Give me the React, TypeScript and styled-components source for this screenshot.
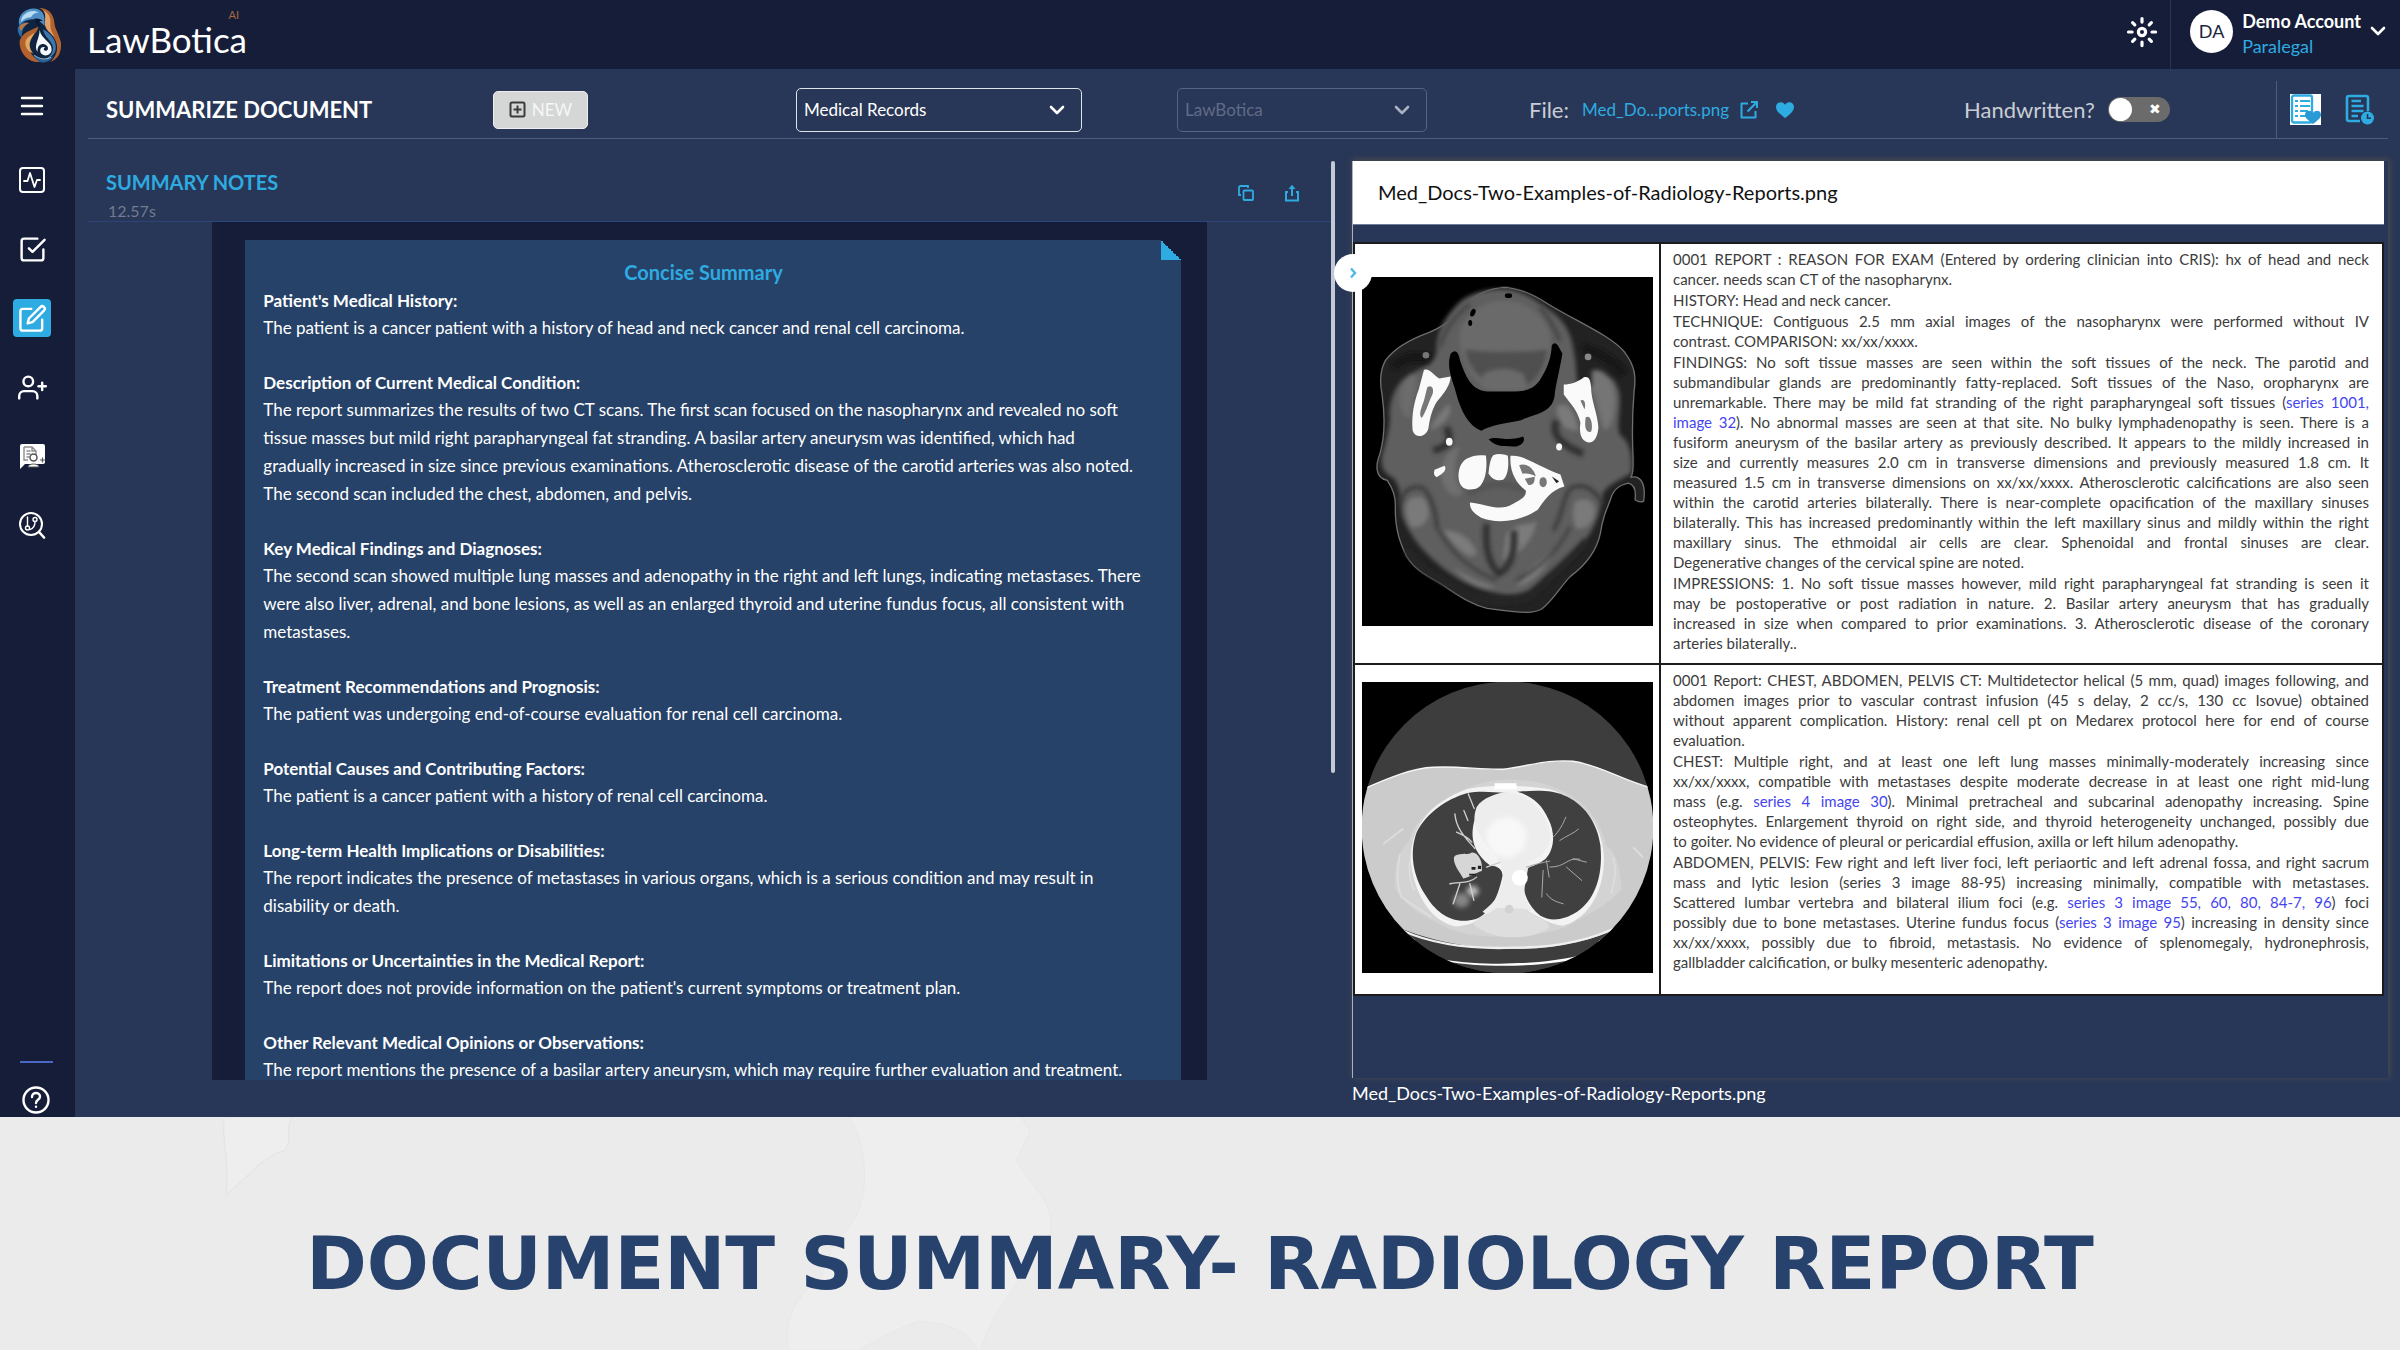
import React from "react";
import styled, { createGlobalStyle } from "styled-components";
import { FiCheckSquare, FiEdit, FiUserPlus } from "react-icons/fi";

const c = {
  navy: "#161d39",
  main: "#283757",
  card: "#264268",
  accent: "#2eabe1",
  line: "#4d5b7c",
  soft: "#c9cdd6",
};

const GlobalStyle = createGlobalStyle`
  *, *::before, *::after { box-sizing: border-box; }
  body { margin: 0; background: #ebebeb; }
  button, select, input { font: inherit; }
  h1, h2, h3, p { margin: 0; }
`;

const Page = styled.div`
  display: flex;
  flex-direction: column;
  height: 100vh;
  font-family: Lato, "Open Sans", sans-serif;
  color: #fff;
`;

const AppWindow = styled.div`
  flex: 1;
  min-height: 0;
  display: flex;
  flex-direction: column;
  background: ${c.navy};
`;

/* ---------- header ---------- */
const Header = styled.header`
  flex: none;
  height: 69px;
  display: flex;
  align-items: stretch;
  padding: 0 14px 0 15px;
`;

const Brand = styled.a`
  display: flex;
  align-items: center;
  gap: 24px;
  color: #fff;
  text-decoration: none;
`;

const BrandText = styled.span`
  display: flex;
  flex-direction: column;
  padding-bottom: 3px;
`;

const BrandMark = styled.small`
  align-self: flex-end;
  margin-right: 8px;
  font-size: 11px;
  line-height: 12px;
  color: #a9683f;
`;

const BrandName = styled.span`
  font-size: 35px;
  line-height: 36px;
`;

const HeaderRight = styled.div`
  display: flex;
  align-items: stretch;
  margin-left: auto;
`;

const ThemeButton = styled.button`
  width: 57px;
  padding: 0 0 5px;
  border: 0;
  background: none;
  display: flex;
  align-items: center;
  justify-content: center;
`;

const Account = styled.button`
  display: flex;
  align-items: center;
  gap: 9px;
  padding: 0 0 7px 19px;
  border: 0;
  border-left: 1px solid #283556;
  background: none;
  color: #fff;
  text-align: left;
`;

const Avatar = styled.span`
  display: flex;
  align-items: center;
  justify-content: center;
  width: 43px;
  height: 43px;
  border-radius: 50%;
  background: #fff;
  color: #1d2540;
  font-size: 18px;
`;

const AccountText = styled.span`
  display: flex;
  flex-direction: column;
  padding-top: 5px;
  font-size: 18px;
  line-height: 25px;
`;

const Role = styled.span`
  color: ${c.accent};
`;

/* ---------- body shell ---------- */
const Shell = styled.div`
  flex: 1;
  min-height: 0;
  display: flex;
`;

const Sidebar = styled.nav`
  flex: none;
  width: 75px;
  display: flex;
  flex-direction: column;
  padding: 18px 0 2px 13px;
`;

const SideButton = styled.button<{ $active?: boolean }>`
  display: flex;
  align-items: center;
  justify-content: center;
  width: 38px;
  height: 38px;
  margin-bottom: 31px;
  padding: 0;
  border: 0;
  border-radius: 4px;
  color: #fff;
  background: ${(p) => (p.$active ? c.accent : "transparent")};
`;

const MenuButton = styled(SideButton)`
  margin-bottom: 36px;
`;

const SideBottom = styled.div`
  display: flex;
  flex-direction: column;
  gap: 22px;
  align-items: flex-start;
  margin-top: auto;
  padding-left: 7px;
`;

const SideRule = styled.hr`
  width: 33px;
  height: 2px;
  margin: 0;
  border: 0;
  background: #4868c4;
`;

const HelpButton = styled.button`
  display: flex;
  padding: 0 0 0 1px;
  border: 0;
  background: none;
`;

const Main = styled.main`
  flex: 1;
  min-width: 0;
  display: flex;
  flex-direction: column;
  padding: 0 12px 0 13px;
  background: ${c.main};
`;

/* ---------- toolbar ---------- */
const Toolbar = styled.div`
  flex: none;
  display: grid;
  grid-template-columns: 387fr 303fr 381fr 352fr 435fr 312fr 112px;
  align-items: center;
  height: 70px;
  padding-left: 18px;
  border-bottom: 1px solid ${c.line};
`;

const PageTitle = styled.h1`
  padding-top: 12px;
  font-size: 22px;
  line-height: 30px;
  font-weight: 700;
`;

const NewButton = styled.button`
  display: flex;
  align-items: center;
  justify-content: center;
  gap: 6px;
  width: 95px;
  height: 38px;
  margin-top: 12px;
  padding: 0;
  border: 1px solid #eeeeee;
  border-radius: 5px;
  background: #d5d6d6;
  color: #f6f7f7;
  font-size: 17px;
  line-height: 24px;
`;

const SelectBox = styled.span<{ $wide?: boolean }>`
  position: relative;
  display: block;
  width: ${(p) => (p.$wide ? "75%" : "71%")};
  margin-top: 12px;
`;

const Select = styled.select`
  appearance: none;
  width: 100%;
  height: 44px;
  padding: 0 36px 0 7px;
  border: 1px solid #dfe3ea;
  border-radius: 5px;
  background: transparent;
  color: #fff;
  font-size: 17px;
  opacity: 1;
  &:disabled {
    border-color: #56627f;
    color: #606b86;
  }
`;

const SelectArrow = styled.span`
  position: absolute;
  top: 17px;
  right: 17px;
  display: flex;
  pointer-events: none;
`;

const FileLine = styled.div`
  display: flex;
  align-items: center;
  padding-top: 12px;
  gap: 13px;
  font-size: 22px;
  line-height: 28px;
  color: ${c.soft};
`;

const FileLink = styled.a`
  display: flex;
  align-items: center;
  gap: 10px;
  margin-right: 3px;
  font-size: 17px;
  color: ${c.accent};
  text-decoration: none;
`;

const PlainButton = styled.button`
  display: flex;
  padding: 0;
  border: 0;
  background: none;
  color: ${c.accent};
`;

const SwitchLabel = styled.label`
  display: flex;
  align-items: center;
  gap: 13px;
  padding-top: 12px;
  font-size: 22px;
  line-height: 28px;
  color: ${c.soft};
`;

const Switch = styled.input`
  appearance: none;
  display: flex;
  align-items: center;
  justify-content: space-between;
  width: 62px;
  height: 25px;
  margin: 0;
  padding: 0 9px 0 1px;
  border-radius: 13px;
  background: #6b6b6b;
  &::before {
    content: "";
    width: 23px;
    height: 23px;
    border-radius: 50%;
    background: #fff;
  }
  &::after {
    content: "✖";
    font-family: "DejaVu Sans", sans-serif;
    font-size: 14px;
    line-height: 25px;
    color: #fff;
  }
`;

const ToolIcons = styled.div`
  display: flex;
  align-self: end;
  align-items: flex-start;
  gap: 24px;
  height: 57px;
  padding: 13px 0 0 13px;
  border-left: 1px solid ${c.line};
`;

/* ---------- workspace ---------- */
const Workspace = styled.div`
  flex: 1;
  min-height: 0;
  display: grid;
  grid-template-columns: 1243fr 4px 1053fr;
  padding-top: 22px;
`;

const Notes = styled.section`
  min-height: 0;
  display: flex;
  flex-direction: column;
  padding-bottom: 37px;
`;

const NotesHeader = styled.div`
  flex: none;
  display: flex;
  align-items: center;
  gap: 28px;
  height: 61px;
  padding: 4px 30px 0 18px;
  border-bottom: 1px solid #2c447a;
`;

const NotesTitles = styled.div`
  flex: 1;
  padding-top: 4px;
`;

const NotesTitle = styled.h2`
  font-size: 20px;
  line-height: 32px;
  font-weight: 700;
  color: ${c.accent};
`;

const Elapsed = styled.p`
  padding-left: 2px;
  font-size: 16px;
  line-height: 26px;
  color: #717b91;
`;

const NotesBody = styled.div`
  flex: 1;
  min-height: 0;
  width: 80%;
  margin-left: 10%;
  padding: 18px 26px 0 33px;
  background: ${c.navy};
  overflow: hidden;
`;

const SummaryCard = styled.article`
  position: relative;
  min-height: 100%;
  padding: 17px 37px 40px 18px;
  background: ${c.card};
  font-size: 17px;
  line-height: 28px;
`;

const Fold = styled.span`
  position: absolute;
  top: 0;
  right: 0;
  width: 20px;
  height: 20px;
  background: linear-gradient(45deg, ${c.accent} 50%, ${c.navy} 50%);
`;

const CardTitle = styled.h2`
  font-size: 20px;
  line-height: 30px;
  font-weight: 700;
  text-align: center;
  color: ${c.accent};
`;

const Block = styled.section`
  margin-bottom: 27px;
`;

const BlockTitle = styled.h3`
  font-size: 17px;
  line-height: 27px;
  font-weight: 700;
`;

const Thumb = styled.div`
  height: 64%;
  border-radius: 2px;
  background: #c3c9d6;
`;

/* ---------- document viewer ---------- */
const Preview = styled.section`
  min-height: 0;
  display: flex;
  flex-direction: column;
  margin-left: 17px;
`;

const Viewer = styled.div`
  position: relative;
  flex: 1;
  min-height: 0;
  padding-right: 4px;
  border-left: 1px solid #aab1c1;
  box-shadow: 1px -1px 6px 1px #474a50;
  background: ${c.main};
`;

const ViewerTitle = styled.h2`
  height: 64px;
  margin-bottom: 17px;
  padding-left: 25px;
  background: #fff;
  border-bottom: 1px solid #6f7d96;
  color: #111;
  font-size: 20px;
  line-height: 63px;
  font-weight: 400;
`;

const CollapseButton = styled.button`
  position: absolute;
  top: 93px;
  left: -19px;
  display: flex;
  align-items: center;
  justify-content: center;
  width: 38px;
  height: 38px;
  padding: 0;
  border: 0;
  border-radius: 50%;
  background: #fff;
`;

const Report = styled.table`
  width: 100%;
  table-layout: fixed;
  border-collapse: collapse;
  background: #fff;
`;

const Row = styled.tr<{ $height: number }>`
  height: ${(p) => p.$height}px;
  & + & td {
    border-top: 4px solid #0c0c0c;
  }
`;

const Cell = styled.td`
  padding: 5px 13px 5px 12px;
  border: 2px solid #1c1c1c;
  vertical-align: top;
  color: #3c3c3c;
  font-size: 15px;
  line-height: 20px;
`;

const ScanCell = styled(Cell)`
  width: 306px;
  padding: 0 5px 5px 7px;
  vertical-align: middle;
  line-height: 0;
`;

const Para = styled.p`
  margin-bottom: 1px;
`;

const Line = styled.span`
  display: block;
  text-align: justify;
  text-align-last: justify;
  white-space: nowrap;
  &:last-child {
    text-align-last: left;
  }
`;

const Ref = styled.a`
  color: #4545f0;
  text-decoration: none;
`;

const Caption = styled.p`
  flex: none;
  height: 39px;
  font-size: 18px;
  line-height: 30px;
`;

/* ---------- banner ---------- */
const Banner = styled.footer`
  position: relative;
  flex: none;
  display: flex;
  align-items: center;
  justify-content: center;
  height: 233px;
  padding-top: 60px;
  background: #ebebeb;
  overflow: hidden;
`;

const BannerTitle = styled.h2`
  position: relative;
  font-family: "DejaVu Sans", sans-serif;
  font-size: 73px;
  line-height: 84px;
  font-weight: 700;
  color: #27426d;
  white-space: nowrap;
`;

const Paper = styled.svg`
  position: absolute;
  inset: 0;
  width: 100%;
  height: 100%;
`;

/* ---------- icons ---------- */
const stroke = {
  fill: "none",
  stroke: "currentColor",
  strokeWidth: 2,
  strokeLinecap: "round",
  strokeLinejoin: "round",
} as const;

const Chevron = ({ color = "#fff" }: { color?: string }) => (
  <svg width="16" height="10" viewBox="0 0 16 10">
    <path d="M2 2l6 6 6-6" fill="none" stroke={color} strokeWidth="2.6" strokeLinecap="round" strokeLinejoin="round" />
  </svg>
);

const Logo = () => (
  <svg width="48" height="60" viewBox="46 22 144 178">
    <path d="M74 36C95 22 140 24 158 50c8 22 4 40 14 58 18 26 16 54 2 70-22 24-66 22-92-2-22-14-24-34-24-48-14-24-12-62 16-92z" fill="#10233f" />
    <path d="M118 30c28 0 44 18 46 44 2 20 14 34 20 60 2 34-12 50-32 58 18-18 24-38 18-58-8-24-30-34-28-62 1-22-6-34-24-42z" fill="#b4622d" />
    <path d="M130 36c18 10 24 24 22 44 0 16 6 26 14 36-22-14-34-28-30-50 2-14 0-22-6-30z" fill="#e0a06a" />
    <path d="M72 42c18-16 48-14 58 4 8 16 2 26 6 38-16-14-22-22-38-20-18 2-32 8-38 20-6-18 0-32 12-42z" fill="#4f8fc6" />
    <path d="M76 48c12-10 30-12 40-4-12 0-18 6-22 14-12 0-22 6-30 14 0-10 4-18 12-24z" fill="#b9dcf2" />
    <path d="M104 62c10-2 20 0 26 8-8-2-12 0-16 4 4 2 8 6 8 12-10-8-16-14-18-24z" fill="#0b1731" />
    <path d="M54 92c6-16 18-20 34-18-14 8-22 22-22 44-8-6-12-16-12-26z" fill="#2f6ca6" />
    <path d="M60 84c10-10 16-10 28-8-12 4-18 12-24 22-4-4-6-8-4-14z" fill="#c07642" />
    <path d="M60 128c10-28 34-30 56-42-4 26-34 32-28 62 2 20 16 32 34 44-38 2-64-28-62-64z" fill="#b4622d" />
    <path d="M78 128c4-10 14-16 26-24-6 16-14 22-14 38 0 8 4 16 10 24-16-6-26-20-22-38z" fill="#e0a863" />
    <path d="M120 96c4 28 36 34 36 58 0 18-22 24-32 12-6-10 0-22 12-18-6 4-4 12 4 10 10-4 4-18-8-20-12 0-20 8-18 24-14-18 6-40 6-66z" fill="#f4f8fb" />
    <path d="M130 94c26 14 42 36 38 60-2 16-16 28-34 32 18-10 26-22 26-36-2-22-26-30-30-56z" fill="#3c78ae" />
    <path d="M100 168c18 20 44 20 62 6-8 16-26 22-42 18-8-4-16-14-20-24z" fill="#2d5f92" />
    <path d="M104 172c16 12 34 14 50 6" fill="none" stroke="#9cc9e8" strokeWidth="3" />
  </svg>
);

const Sun = () => (
  <svg width="32" height="32" viewBox="0 0 32 32" fill="none" stroke="#fff" strokeWidth="3.2" strokeLinecap="round">
    <circle cx="16" cy="16" r="3.6" />
    <path d="M16 2.5v3.6M16 26v3.6M2.5 16h3.6M26 16h3.6M6.6 6.6l2.2 2.2M23.2 23.2l2.2 2.2M25.4 6.6l-2.2 2.2M8.8 23.2l-2.2 2.2" />
  </svg>
);

const Menu = () => (
  <svg width="24" height="22" viewBox="0 0 24 22" stroke="#fff" strokeWidth="2.4" strokeLinecap="round">
    <path d="M2 3h20M2 11h20M2 19h20" />
  </svg>
);

const ActivityBox = () => (
  <svg width="28" height="28" viewBox="0 0 28 28" {...stroke}>
    <rect x="2" y="2" width="24" height="24" rx="3" />
    <path d="M6 15h3.5l2.5-8 4.5 14 2.5-7H22" strokeWidth="1.8" />
  </svg>
);

const ChatDoc = () => (
  <svg width="28" height="28" viewBox="0 0 28 28">
    <path d="M4 2h21a2 2 0 012 2v16a2 2 0 01-2 2H7l-5 5V4a2 2 0 012-2z" fill="#fff" />
    <path d="M6 5h8l4 4v5M6 5v13h4M14 5v4h4M8.500 9h4M8.500 12h4M8.500 15h3" fill="none" stroke="#8e8e8e" strokeWidth="1.4" />
    <circle cx="15.500" cy="15.500" r="3.500" fill="#fff" stroke="#555" strokeWidth="1.500" />
    <path d="M10 25c0-4 11-4 11 0z" fill="#fff" stroke="#555" strokeWidth="1" />
    <path d="M22 18h5M24.500 15.500v5" stroke="#555" strokeWidth="1.200" />
  </svg>
);

const SearchGraph = () => (
  <svg width="28" height="28" viewBox="0 0 28 28" {...stroke}>
    <circle cx="13" cy="13" r="11" />
    <path d="M21 21l5 5.500" strokeWidth="2.600" />
    <g strokeWidth="1.400">
      <circle cx="9.500" cy="17" r="2" />
      <circle cx="17" cy="8.500" r="2" />
      <path d="M9.500 15V6M17 10.500c0 4-1.500 7-5 8" />
    </g>
  </svg>
);

const Help = () => (
  <svg width="30" height="30" viewBox="0 0 30 30" fill="none" stroke="#fff" strokeWidth="2.400" strokeLinecap="round">
    <circle cx="15" cy="15" r="12.500" />
    <path d="M11 12c0-5.500 8-5 8-.5 0 3.500-4 3-4 6.500M15 21.600v.2" />
  </svg>
);

const PlusBox = () => (
  <svg width="17" height="17" viewBox="0 0 17 17" fill="none" stroke="#3b3b3b" strokeWidth="2">
    <rect x="1.500" y="1.500" width="14" height="14" rx="1.500" />
    <path d="M8.500 4.500v8M4.500 8.500h8" />
  </svg>
);

const External = () => (
  <svg width="20" height="20" viewBox="0 0 20 20" fill="none" stroke="currentColor" strokeWidth="2" strokeLinejoin="round">
    <path d="M9 3.500H2.500v14h14V11M12 2h6v6M18 2L8.500 11.500" />
  </svg>
);

const Heart = () => (
  <svg width="20" height="20" viewBox="0 0 20 20">
    <path d="M10 18C4 13.500 1 10.600 1 7c0-5 6.500-6.500 9-2.200C12.500.5 19 2 19 7c0 3.600-3 6.500-9 11z" fill="currentColor" />
  </svg>
);

const Copy = () => (
  <svg width="18" height="18" viewBox="0 0 18 18" fill="none" stroke="currentColor" strokeWidth="1.800">
    <rect x="6.500" y="6.500" width="9.500" height="9.500" rx="1" />
    <path d="M4 11H2V3.500C2 2.600 2.600 2 3.500 2H11v2" />
  </svg>
);

const Share = () => (
  <svg width="18" height="18" viewBox="0 0 18 18" fill="none" stroke="currentColor" strokeWidth="2">
    <path d="M5 8H3v8.500h12V8h-2M9 12V4" />
    <path d="M5.500 5L9 .8 12.500 5z" fill="currentColor" stroke="none" />
  </svg>
);

const SavedNotes = () => (
  <svg width="31" height="31" viewBox="0 0 31 31">
    <path d="M0 0h31v31H0z" fill="#fff" />
    <rect x="2" y="1.500" width="20" height="27" rx="2" fill="#fff" stroke={c.accent} strokeWidth="2.400" />
    <path d="M5 7h3M10 7h10M5 12h3M10 12h10M5 17h3M10 17h8M5 22h3M10 22h6" stroke={c.accent} strokeWidth="2.200" />
    <path d="M23 30c-6-4.500-8-6.500-8-9.500 0-4.500 6-5 8-1.500 2-3.500 8-3 8 1.500 0 3-2 5-8 9.500z" fill="#2a9ad6" />
  </svg>
);

const HistoryNotes = () => (
  <svg width="30" height="31" viewBox="0 0 30 31">
    <path d="M15 27H4a2 2 0 01-2-2V4a2 2 0 012-2h17a2 2 0 012 2v13" fill="none" stroke={c.accent} strokeWidth="2.600" />
    <path d="M6.500 7H16M6.500 12H18.500M6.500 17H18.500M6.500 22H13" stroke={c.accent} strokeWidth="2.400" />
    <circle cx="22.500" cy="24" r="6.500" fill={c.accent} />
    <path d="M22.500 20v4.200H26" fill="none" stroke={c.main} strokeWidth="1.600" />
  </svg>
);

/* ---------- scans ---------- */
const HeadScan = () => (
  <svg width="291" height="349" viewBox="66 139 874 1048" role="img" aria-label="Axial CT of the nasopharynx">
    <defs>
      <filter id="soft" x="-20%" y="-20%" width="140%" height="140%">
        <feGaussianBlur stdDeviation="7" />
      </filter>
      <filter id="edge"><feGaussianBlur stdDeviation="2" /></filter>
    </defs>
    <path d="M66 139h874v1048H66z" fill="#000" />
    <path d="M485 170c50 0 95 20 140 50 80 50 190 95 230 145 30 40 35 70 28 120-5 60-5 150-3 195 0 30 2 45-6 60 30-6 45 20 38 72-10 6-20 0-26-4 4-30-4-46-20-50-30 6-46 20-54 50-16 40-24 60-30 100-12 60-50 100-90 130-30 30-50 70-86 98-12 6-26 10-44 10-50 0-80-6-120-12-60-14-100-50-150-80-40-22-70-40-92-76-20-40-34-80-34-144 2-34-6-56-24-84-40-8-34-50-22-80 14-50 16-110 6-180-6-30-6-70 10-100 30-40 80-66 130-84 46-20 80-46 94-70 40-40 80-66 145-66z" fill="#232323" stroke="#6e6e6e" strokeWidth="4" filter="url(#edge)" />
    <g filter="url(#soft)">
      <path d="M485 176c46 0 90 20 135 56 60 40 76 80 84 140 10 50 0 100 30 130 30-80 90-90 106-10 4 50-10 90 0 120 30 20 40 60 34 116-30 20-66 30-84 60-10 60-20 100-60 150-40 50-90 90-140 130-30 22-60 26-90 26-80-10-140-40-190-80-50-40-100-90-124-160-6-40 0-80-24-110-40-20-44-50-30-90 10-40 20-70 16-110 6-60 30-100 76-120 40-20 60-30 66-60 0-60 20-100 70-150 30-24 70-38 125-38z" fill="#5f5f5f" />
      <path d="M200 440c20-20 30-10 30 20s-20 60-14 100c-20 10-36-20-36-50s6-50 20-70z" fill="#6c6c6c" />
      <path d="M756 420c40-10 66 30 70 80 0 50-10 90-30 100-20-30-16-80-40-120z" fill="#747474" />
      <path d="M268 600c20-40 40-60 60-80 10 30-10 60-60 80zM650 530c30-20 50 0 66 70-40 0-60-20-66-70z" fill="#7a7a7a" />
      <path d="M205 810c30-20 60-10 60 30s-20 50-50 50c-20-30-20-60-10-80zM705 815c40-20 60 0 60 30-6 40-30 50-56 50-10-30-10-50-4-80z" fill="#7a7a7a" />
      <path d="M310 900c50 0 90 30 100 70-20 20-60-10-100-70zM500 910c40-40 70-20 90-40-10 60-50 100-100 120zM340 1010c40 30 80 50 130 60-40 10-90-10-130-60zM640 960c-20 50-50 90-110 110 20-40 60-70 110-110z" fill="#7c7c7c" />
      <path d="M300 730c10-60 40-80 60-80-20 40-20 100 10 140-40 20-60-20-70-60z" fill="#707070" />
      <path d="M360 300c20-50 70-90 130-90s110 30 140 90c10 80-10 140-60 170-50 10-110 10-150-8-40-40-64-90-60-162z" fill="#6a6a6a" />
      <path d="M376 356c40 10 190 10 246 0-4 50-26 90-60 110-50 8-90 0-120-10-40-30-60-56-66-100z" fill="#505050" />
      <path d="M430 430c40-20 80-20 120 0l16 44c-50 14-110 12-140-4z" fill="#6a6a6a" />
    </g>
    <g filter="url(#soft)" fill="none">
      <path d="M300 350c10-50 50-100 90-130M660 330c-20-50-40-80-60-100" stroke="#404040" strokeWidth="10" />
      <path d="M160 410c40-40 70-30 110-26M730 350c60 20 100 50 120 80" stroke="#161616" strokeWidth="26" />
      <path d="M320 590c20 50 0 60-40 70M650 570c-20 50 30 80 80 100" stroke="#303030" strokeWidth="22" />
      <path d="M180 820c10-50 40-50 60-50s50 60 50 120M790 820c-30-50-60-60-90-50s-30 90-60 130" stroke="#363636" strokeWidth="10" />
      <path d="M440 880c-4 60 0 110 36 150 40-20 50-70 46-130" stroke="#303030" strokeWidth="20" />
      <path d="M290 890c50 90 110 130 180 160M690 890c-40 80-90 120-160 160" stroke="#3c3c3c" strokeWidth="9" />
      <path d="M385 790c50-30 110-40 170-10" stroke="#555" strokeWidth="22" />
      <path d="M200 960c50 70 120 100 200 140 50 14 110 14 170 0 50-60 110-100 170-170" stroke="#262626" strokeWidth="20" />
    </g>
    <path d="M332 370c12-16 24-8 28 18 20 60 40 95 90 95 70-2 120 10 150-34 26-40 34-70 36-104 12-20 22 6 32 24-10 60-20 90-24 130-10 50-60 50-100 70-50 10-90 14-120 32-50-20-70-90-80-130-14-40-22-70-12-101z" fill="#000" filter="url(#edge)" />
    <path d="M446 626c30-12 50 10 104-8 8 14-4 26-20 30-30-2-60 4-84-22z" fill="#000" />
    <g fill="#000">
      <ellipse cx="506" cy="195" rx="11" ry="7" />
      <ellipse cx="399" cy="246" rx="7" ry="12" transform="rotate(25 399 246)" />
      <ellipse cx="391" cy="277" rx="6" ry="9" />
    </g>
    <g fill="#fafafa" filter="url(#edge)">
      <path d="M252 418c16-6 28 14 46 26l34-6c0 20-14 44-30 62-20 20-30 50-36 90-4 30-40 36-48 10-4-50 6-90 18-122z" />
      <path d="M672 462c20 0 44-8 60-22 18-4 20 10 22 30 0 40 20 80 22 120-2 30-14 48-30 46-24-6-28-30-24-60-10-40-30-56-50-84z" />
      <path d="M380 685c20-12 40-12 58-10 6 40-2 90-30 100-30 8-50-4-52-34-2-20 6-46 24-56z" />
      <path d="M460 674c14-6 32-4 44 2 4 30 0 60-14 72-16 4-34 0-44-20 2-20 4-40 14-54z" />
      <path d="M512 676c40-4 80 30 150 56l12 36c-40 10-60 40-80 70-50 34-120 44-170 24-22-14-34-24-34-46 50 4 90 30 130 4 30-16 40-24 38-40-30-20-50-60-46-104z" />
      <ellipse cx="328" cy="634" rx="10" ry="12" />
      <path d="M284 718l30-12c8 12-4 24-24 34-10-6-8-14-6-22z" />
      <ellipse cx="658" cy="649" rx="9" ry="11" />
    </g>
    <g fill="#777">
      <path d="M262 470c16-10 20 8 16 20-10 20-18 50-32 72-14-10 4-40 8-60zM722 510c16-10 16 20 12 26zM738 560c18-10 22 30 16 44-18 4-20-20-16-44zM538 704c20-8 44 8 50 34-16-10-30-10-40-8zM555 745l30-6c0 24-10 26-20 24z" />
      <ellipse cx="610" cy="755" rx="11" ry="15" />
      <path d="M636 738l22 14-8 6z" fill="#222" />
    </g>
    <circle cx="258" cy="374" r="10" fill="#777" filter="url(#edge)" />
    <circle cx="745" cy="379" r="10" fill="#888" filter="url(#edge)" />
  </svg>
);

const ChestScan = () => (
  <svg width="291" height="291" viewBox="66 124 874 874" role="img" aria-label="Axial CT of the chest">
    <defs>
      <clipPath id="bore"><circle cx="503" cy="561" r="438" /></clipPath>
      <filter id="fine"><feGaussianBlur stdDeviation="2" /></filter>
      <filter id="haze" x="-50%" y="-50%" width="200%" height="200%"><feGaussianBlur stdDeviation="8" /></filter>
    </defs>
    <path d="M66 124h874v874H66z" fill="#000" />
    <g clipPath="url(#bore)">
      <path d="M66 124h874v874H66z" fill="#3d3d3d" />
      <path d="M60 450c90-40 160-68 220-70 80-4 140 8 210 6 80-10 130-30 210-24 90 14 150 60 250 84v400c-110 50-250 82-440 82-180 0-330-30-450-90z" fill="#cbcbcb" stroke="#f6f6f6" strokeWidth="4" />
      <path d="M60 800c100 70 270 126 460 126 120 0 230-20 330-70l100-60v210H60z" fill="#3d3d3d" />
      <path d="M190 872c100 44 220 54 330 50 120 0 230-20 320-66" stroke="#eee" strokeWidth="7" fill="none" />
      <path d="M316 958c120 20 290 14 402-12l-10 10c-110 24-280 28-392 6z" fill="#fff" />
    </g>
    <g filter="url(#fine)">
      <path d="M390 440c70-30 160-30 240-4 90 30 150 90 170 180 30 20 40 60 46 130-40 50-110 80-160 110-90 40-270 46-360 8-60-30-130-60-160-120-4-50 0-100 40-140 20-70 90-130 184-164z" fill="#d3d3d3" />
      <path d="M380 446c60-14 170-14 250 0 90 26 154 94 162 194 6 90-34 194-124 216-70-10-100-60-160-60s-80 60-160 62c-80-14-130-110-136-204 4-110 70-170 168-208z" fill="#f3f3f3" />
      <path d="M380 458c50-10 90 0 120-2-20 20-80 30-98 90-14 60 10 100 50 130 20 0 36 10 36 30-10 50-30 110-80 130-70 20-120-20-150-70-40-60-50-130-28-190 30-60 90-100 150-118z" fill="#3f3f3f" />
      <path d="M532 454c60-6 110-4 140 10 60 24 100 80 110 150 8 80-10 160-70 200-40 26-80 30-110 12-40-30-50-70-56-110-2-40 30-30 70-60 30-30 30-80 10-120-20-46-50-70-94-82z" fill="#414141" />
      <path d="M500 454c60 6 110 50 128 110 10 50-10 80-60 100l-10 60c-10 40 0 60 20 80l-70 60-80-50c40-30 60-60 62-110-6-40-20-60-40-74-30-50-60-70-40-130 20-30 60-40 90-46z" fill="#ededed" />
      <path d="M470 802c-20 20-50 20-70 50 60 50 170 50 230 10-10-30-40-26-70-56z" fill="#dedede" />
      <path d="M342 650c10-16 40-4 54-14 20-2 34 30 30 56-20 6-40 20-56 22-10-20-30-40-28-64z" fill="#d6d6d6" />
      <circle cx="508" cy="806" r="13" fill="#d2d2d2" />
      <path d="M464 428h66v18h-66z" fill="#fff" />
    </g>
    <ellipse cx="398" cy="752" rx="18" ry="16" fill="#bdbdbd" filter="url(#haze)" />
    <ellipse cx="365" cy="780" rx="24" ry="22" fill="#858585" filter="url(#haze)" />
    <ellipse cx="500" cy="590" rx="60" ry="60" fill="#f8f8f8" filter="url(#haze)" />
    <circle cx="540" cy="712" r="24" fill="#fff" />
    <g fill="none" stroke="#cfcfcf" strokeWidth="4" filter="url(#fine)" strokeLinecap="round">
      <path d="M385 460l18 44M345 520c4 50 40 80 60 104M350 575c20 10 34 14 46 30M372 510l12 30M330 730c30-6 60 0 80-20M340 790l20-60M390 730l12 50M440 680l40-14" />
    </g>
    <g fill="none" stroke="#a8a8a8" strokeWidth="3" filter="url(#fine)" strokeLinecap="round">
      <path d="M560 680c30-10 50-14 70-18M630 680c50 0 50-30 90-24M700 655l40 10M680 680l46 40M610 690l-4 80M620 760c14 20 30 24 50 30M640 590c20-20 30-40 38-60M660 600c20-14 40-20 56-34M620 660l8 50" />
    </g>
    <path d="M395 680h12v8h-12zM414 676h10v10h-10zM388 700h20v5h-20z" fill="#222" />
    <g fill="none" stroke="#dedede" strokeWidth="5" filter="url(#fine)">
      <path d="M130 610l60-46M180 640c-10 50-10 90 4 130l90 60M820 650c10 40 8 60-6 110M210 660c-4 40 0 70 14 90M880 620l30 30M510 826v50" />
    </g>
  </svg>
);

/* ---------- content ---------- */
const summary: [string, string][] = [
  ["Patient's Medical History:", "The patient is a cancer patient with a history of head and neck cancer and renal cell carcinoma."],
  ["Description of Current Medical Condition:", "The report summarizes the results of two CT scans. The first scan focused on the nasopharynx and revealed no soft tissue masses but mild right parapharyngeal fat stranding. A basilar artery aneurysm was identified, which had gradually increased in size since previous examinations. Atherosclerotic disease of the carotid arteries was also noted. The second scan included the chest, abdomen, and pelvis."],
  ["Key Medical Findings and Diagnoses:", "The second scan showed multiple lung masses and adenopathy in the right and left lungs, indicating metastases. There were also liver, adrenal, and bone lesions, as well as an enlarged thyroid and uterine fundus focus, all consistent with metastases."],
  ["Treatment Recommendations and Prognosis:", "The patient was undergoing end-of-course evaluation for renal cell carcinoma."],
  ["Potential Causes and Contributing Factors:", "The patient is a cancer patient with a history of renal cell carcinoma."],
  ["Long-term Health Implications or Disabilities:", "The report indicates the presence of metastases in various organs, which is a serious condition and may result in disability or death."],
  ["Limitations or Uncertainties in the Medical Report:", "The report does not provide information on the patient's current symptoms or treatment plan."],
  ["Other Relevant Medical Opinions or Observations:", "The report mentions the presence of a basilar artery aneurysm, which may require further evaluation and treatment."],
];

/* Text between square brackets is a link to an image series. */
const headReport: string[][] = [
  ["0001 REPORT : REASON FOR EXAM (Entered by ordering clinician into CRIS): hx of head and neck", "cancer. needs scan CT of the nasopharynx."],
  ["HISTORY: Head and neck cancer."],
  ["TECHNIQUE: Contiguous 2.5 mm axial images of the nasopharynx were performed without IV", "contrast. COMPARISON: xx/xx/xxxx."],
  [
    "FINDINGS: No soft tissue masses are seen within the soft tissues of the neck. The parotid and",
    "submandibular glands are predominantly fatty-replaced. Soft tissues of the Naso, oropharynx are",
    "unremarkable. There may be mild fat stranding of the right parapharyngeal soft tissues ([series 1001,]",
    "[image 32]). No abnormal masses are seen at that site. No bulky lymphadenopathy is seen. There is a",
    "fusiform aneurysm of the basilar artery as previously described. It appears to the mildly increased in",
    "size and currently measures 2.0 cm in transverse dimensions and previously measured 1.8 cm. It",
    "measured 1.5 cm in transverse dimensions on xx/xx/xxxx. Atherosclerotic calcifications are also seen",
    "within the carotid arteries bilaterally. There is near-complete opacification of the maxillary sinuses",
    "bilaterally. This has increased predominantly within the left maxillary sinus and mildly within the right",
    "maxillary sinus. The ethmoidal air cells are clear. Sphenoidal and frontal sinuses are clear.",
    "Degenerative changes of the cervical spine are noted.",
  ],
  [
    "IMPRESSIONS: 1. No soft tissue masses however, mild right parapharyngeal fat stranding is seen it",
    "may be postoperative or post radiation in nature. 2. Basilar artery aneurysm that has gradually",
    "increased in size when compared to prior examinations. 3. Atherosclerotic disease of the coronary",
    "arteries bilaterally..",
  ],
];

const chestReport: string[][] = [
  [
    "0001 Report: CHEST, ABDOMEN, PELVIS CT: Multidetector helical (5 mm, quad) images following, and",
    "abdomen images prior to vascular contrast infusion (45 s delay, 2 cc/s, 130 cc Isovue) obtained",
    "without apparent complication. History: renal cell pt on Medarex protocol here for end of course",
    "evaluation.",
  ],
  [
    "CHEST: Multiple right, and at least one left lung masses minimally-moderately increasing since",
    "xx/xx/xxxx, compatible with metastases despite moderate decrease in at least one right mid-lung",
    "mass (e.g. [series 4 image 30]). Minimal pretracheal and subcarinal adenopathy increasing. Spine",
    "osteophytes. Enlargement thyroid on right side, and thyroid heterogeneity unchanged, possibly due",
    "to goiter. No evidence of pleural or pericardial effusion, axilla or left hilum adenopathy.",
  ],
  [
    "ABDOMEN, PELVIS: Few right and left liver foci, left periaortic and left adrenal fossa, and right sacrum",
    "mass and lytic lesion (series 3 image 88-95) increasing minimally, compatible with metastases.",
    "Scattered lumbar vertebra and bilateral ilium foci (e.g. [series 3 image 55, 60, 80, 84-7, 96]) foci",
    "possibly due to bone metastases. Uterine fundus focus ([series 3 image 95]) increasing in density since",
    "xx/xx/xxxx, possibly due to fibroid, metastasis. No evidence of splenomegaly, hydronephrosis,",
    "gallbladder calcification, or bulky mesenteric adenopathy.",
  ],
];

const ReportText = ({ paragraphs }: { paragraphs: string[][] }) => (
  <>
    {paragraphs.map((lines, i) => (
      <Para key={i}>
        {lines.map((line, j) => (
          <Line key={j}>
            {line.split(/(\[[^\]]+\])/).map((part, k) =>
              part.startsWith("[") ? <Ref key={k} href="#series">{part.slice(1, -1)}</Ref> : part
            )}
          </Line>
        ))}
      </Para>
    ))}
  </>
);

const fileName = "Med_Docs-Two-Examples-of-Radiology-Reports.png";

export default function App() {
  return (
    <Page>
      <GlobalStyle />
      <AppWindow>
        <Header>
          <Brand href="#home">
            <Logo />
            <BrandText>
              <BrandMark>AI</BrandMark>
              <BrandName>LawBotica</BrandName>
            </BrandText>
          </Brand>
          <HeaderRight>
            <ThemeButton aria-label="Toggle theme"><Sun /></ThemeButton>
            <Account>
              <Avatar>DA</Avatar>
              <AccountText>
                <b>Demo Account</b>
                <Role>Paralegal</Role>
              </AccountText>
              <Chevron />
            </Account>
          </HeaderRight>
        </Header>
        <Shell>
          <Sidebar>
            <MenuButton aria-label="Menu"><Menu /></MenuButton>
            <SideButton aria-label="Activity"><ActivityBox /></SideButton>
            <SideButton aria-label="Tasks"><FiCheckSquare size={29} /></SideButton>
            <SideButton aria-label="Summarize" $active><FiEdit size={29} /></SideButton>
            <SideButton aria-label="Add client"><FiUserPlus size={29} /></SideButton>
            <SideButton aria-label="Document chat"><ChatDoc /></SideButton>
            <SideButton aria-label="Research"><SearchGraph /></SideButton>
            <SideBottom>
              <SideRule />
              <HelpButton aria-label="Help"><Help /></HelpButton>
            </SideBottom>
          </Sidebar>
          <Main>
            <Toolbar>
              <PageTitle>SUMMARIZE DOCUMENT</PageTitle>
              <NewButton><PlusBox />NEW</NewButton>
              <SelectBox $wide>
                <Select aria-label="Document type" defaultValue="m"><option value="m">Medical Records</option></Select>
                <SelectArrow><Chevron /></SelectArrow>
              </SelectBox>
              <SelectBox>
                <Select aria-label="Model" defaultValue="l" disabled><option value="l">LawBotica</option></Select>
                <SelectArrow><Chevron color="#aab1c0" /></SelectArrow>
              </SelectBox>
              <FileLine>
                File:
                <FileLink href="#file">Med_Do...ports.png <External /></FileLink>
                <PlainButton aria-label="Favorite"><Heart /></PlainButton>
              </FileLine>
              <SwitchLabel>
                Handwritten?
                <Switch type="checkbox" />
              </SwitchLabel>
              <ToolIcons>
                <PlainButton aria-label="Saved summaries"><SavedNotes /></PlainButton>
                <PlainButton aria-label="History"><HistoryNotes /></PlainButton>
              </ToolIcons>
            </Toolbar>
            <Workspace>
              <Notes>
                <NotesHeader>
                  <NotesTitles>
                    <NotesTitle>SUMMARY NOTES</NotesTitle>
                    <Elapsed>12.57s</Elapsed>
                  </NotesTitles>
                  <PlainButton aria-label="Copy"><Copy /></PlainButton>
                  <PlainButton aria-label="Share"><Share /></PlainButton>
                </NotesHeader>
                <NotesBody>
                  <SummaryCard>
                    <Fold />
                    <CardTitle>Concise Summary</CardTitle>
                    {summary.map(([title, text]) => (
                      <Block key={title}>
                        <BlockTitle>{title}</BlockTitle>
                        <p>{text}</p>
                      </Block>
                    ))}
                  </SummaryCard>
                </NotesBody>
              </Notes>
              <Thumb />
              <Preview>
                <Viewer>
                  <ViewerTitle>{fileName}</ViewerTitle>
                  <Report>
                    <tbody>
                      <Row $height={421}>
                        <ScanCell><HeadScan /></ScanCell>
                        <Cell><ReportText paragraphs={headReport} /></Cell>
                      </Row>
                      <Row $height={331}>
                        <ScanCell><ChestScan /></ScanCell>
                        <Cell><ReportText paragraphs={chestReport} /></Cell>
                      </Row>
                    </tbody>
                  </Report>
                  <CollapseButton aria-label="Collapse preview">
                    <svg width="8" height="12" viewBox="0 0 8 12">
                      <path d="M2 1.500L6 6l-4 4.500" fill="none" stroke="#4db8e8" strokeWidth="2.400" />
                    </svg>
                  </CollapseButton>
                </Viewer>
                <Caption>{fileName}</Caption>
              </Preview>
            </Workspace>
          </Main>
        </Shell>
      </AppWindow>
      <Banner>
        <Paper viewBox="0 0 2400 233" preserveAspectRatio="none" aria-hidden="true">
          <path d="M224 0h68c-8 14 2 22-8 34-20 4-34 24-58 44 4-30-4-50-2-78z" fill="#eeeeee" stroke="#e3e3e3" />
          <path d="M850 0h170l10 14-14 30c20 30 40 44 34 74-20 40-60 70-70 120-10-20-20-30-60-34-60 20-90 60-128 40-10-30-4-60 30-84 6-30 20-40 34-60 14-30 10-70-6-100z" fill="#eeeeee" stroke="#e8e8e8" />
        </Paper>
        <BannerTitle>DOCUMENT SUMMARY- RADIOLOGY REPORT</BannerTitle>
      </Banner>
    </Page>
  );
}
